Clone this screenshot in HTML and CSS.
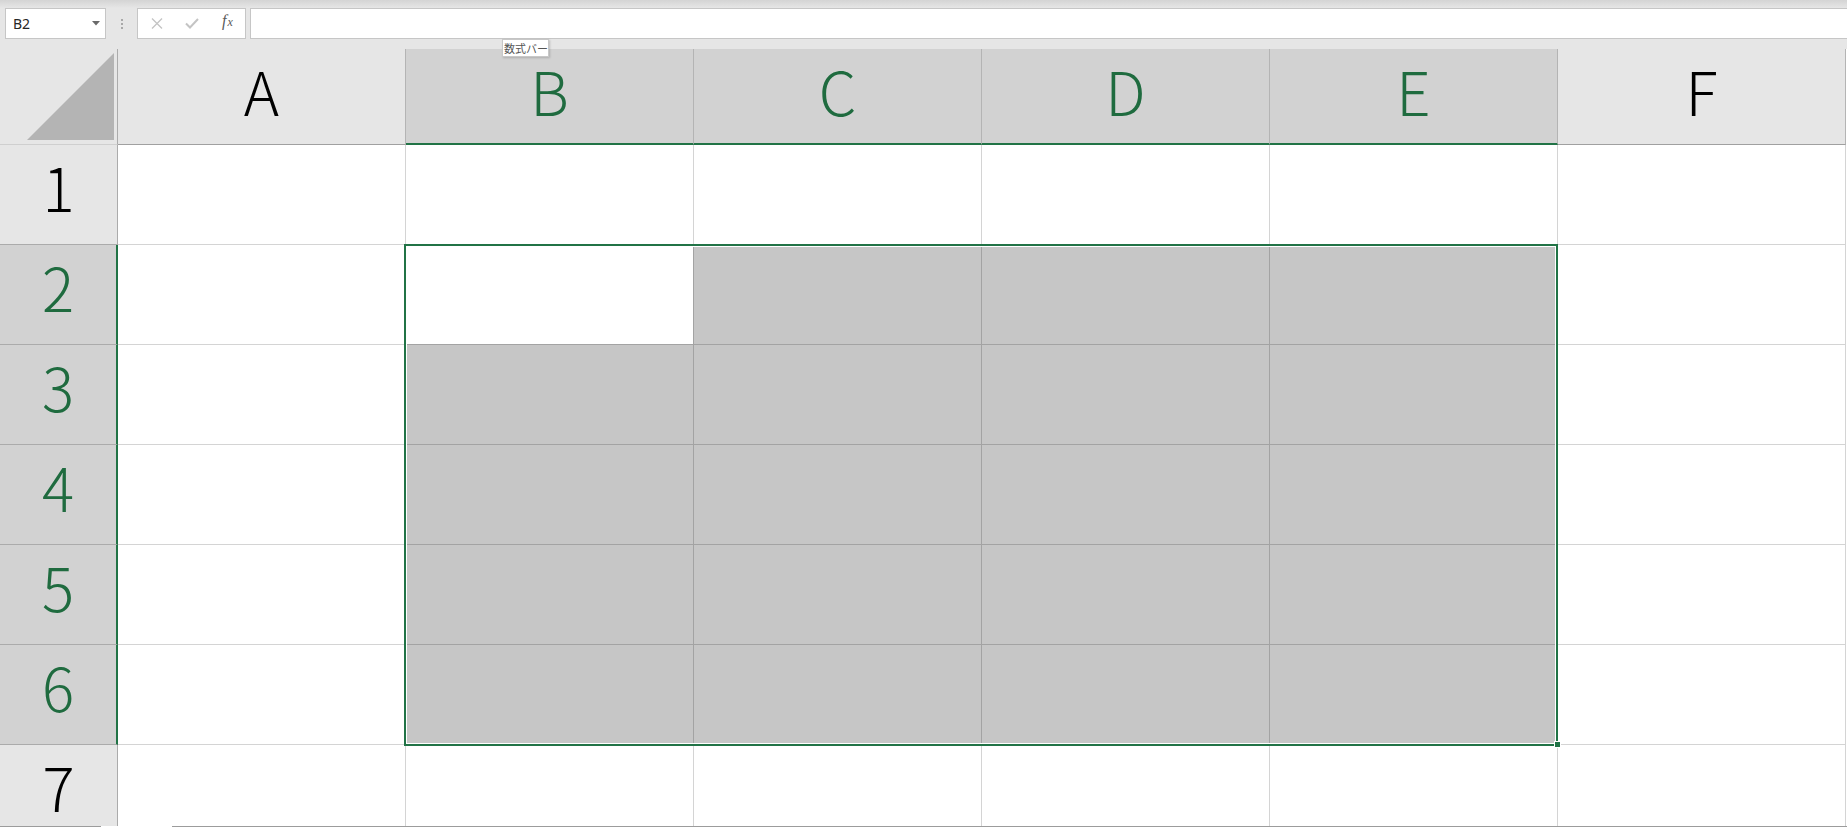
FILE: index.html
```html
<!DOCTYPE html>
<html lang="ja">
<head>
<meta charset="utf-8">
<title>Excel</title>
<link rel="stylesheet" href="styles.css">
</head>
<body>
<div class="toolbar">
  <div class="namebox"><span>B2</span><svg class="caret" width="8" height="5" viewBox="0 0 8 5"><polygon points="0,0 8,0 4,4.5" fill="#6a6a6a"/></svg></div>
  <div class="grip"><i></i><i></i><i></i></div>
  <div class="fbtns">
    <div class="slot"><svg width="12" height="11" viewBox="0 0 12 11"><path d="M1 0.5 L11 10.5 M11 0.5 L1 10.5" stroke="#c4c4c4" stroke-width="1.3" fill="none"/></svg></div>
    <div class="slot"><svg width="14" height="11" viewBox="0 0 14 11"><path d="M1 5.5 L5 9.5 L13 1" stroke="#c4c4c4" stroke-width="2" fill="none"/></svg></div>
    <div class="slot fx"><i>f</i><span class="fxx">x</span></div>
  </div>
  <div class="finput"></div>
</div>
<div class="tooltip">数式バー</div>
<div class="sheet">
  <div class="grid">
    <div class="corner"><svg width="117" height="95" viewBox="0 0 117 95"><polygon points="114,4 114,91 27,91" fill="#b4b4b4"/></svg></div>
    <div class="ch"><span class="lbl">A</span></div>
    <div class="ch sel"><span class="lbl">B</span></div>
    <div class="ch sel"><span class="lbl">C</span></div>
    <div class="ch sel"><span class="lbl">D</span></div>
    <div class="ch sel"><span class="lbl">E</span></div>
    <div class="ch"><span class="lbl">F</span></div>

    <div class="rh"><span class="lbl">1</span></div>
    <div class="c"></div><div class="c"></div><div class="c"></div><div class="c"></div><div class="c"></div><div class="c"></div>

    <div class="rh sel"><span class="lbl">2</span></div>
    <div class="c"></div><div class="c active"></div><div class="c sel"></div><div class="c sel"></div><div class="c sel"></div><div class="c"></div>

    <div class="rh sel"><span class="lbl">3</span></div>
    <div class="c"></div><div class="c sel"></div><div class="c sel"></div><div class="c sel"></div><div class="c sel"></div><div class="c"></div>

    <div class="rh sel"><span class="lbl">4</span></div>
    <div class="c"></div><div class="c sel"></div><div class="c sel"></div><div class="c sel"></div><div class="c sel"></div><div class="c"></div>

    <div class="rh sel"><span class="lbl">5</span></div>
    <div class="c"></div><div class="c sel"></div><div class="c sel"></div><div class="c sel"></div><div class="c sel"></div><div class="c"></div>

    <div class="rh sel"><span class="lbl">6</span></div>
    <div class="c"></div><div class="c sel"></div><div class="c sel"></div><div class="c sel"></div><div class="c sel"></div><div class="c"></div>

    <div class="rh"><span class="lbl">7</span></div>
    <div class="c"></div><div class="c"></div><div class="c"></div><div class="c"></div><div class="c"></div><div class="c"></div>
  </div>
  <div class="selection"></div>
  <div class="handle"></div>
</div>
<div class="tabgap"></div>
</body>
</html>
```

FILE: styles.css
```css
html, body {
  margin: 0;
  padding: 0;
}
body {
  width: 1847px;
  height: 827px;
  overflow: hidden;
  position: relative;
  background: #e6e6e6;
  font-family: "Noto Sans", "Noto Sans CJK JP", sans-serif;
}

/* formula bar */
.toolbar {
  height: 49px;
  box-sizing: border-box;
  padding: 8px 0 0 5px;
  display: flex;
  align-items: flex-start;
  background: linear-gradient(#d4d4d4, #e6e6e6 8px);
}
.namebox {
  width: 101px;
  height: 31px;
  box-sizing: border-box;
  border: 1px solid #c6c6c6;
  background: #fff;
  display: flex;
  align-items: center;
  justify-content: space-between;
  padding: 0 5px 0 7px;
  font-size: 14px;
  color: #262626;
}
.caret { display: block; }
.grip {
  width: 31px;
  height: 31px;
  display: flex;
  flex-direction: column;
  align-items: center;
  justify-content: center;
  gap: 2px;
}
.grip i {
  display: block;
  width: 2px;
  height: 2px;
  background: #a8a8a8;
}
.fbtns {
  width: 109px;
  height: 31px;
  box-sizing: border-box;
  border: 1px solid #c6c6c6;
  background: #fff;
  display: flex;
  align-items: center;
  padding-left: 1px;
}
.slot {
  width: 36px;
  height: 29px;
  display: flex;
  align-items: center;
  justify-content: center;
}
.slot svg { display: block; }
.fx {
  font-family: "Liberation Serif", serif;
  font-size: 16px;
  color: #5a5a5a;
  font-style: italic;
  line-height: 1;
  align-items: baseline;
  padding-top: 4px;
  box-sizing: border-box;
}
.fx i { font-style: italic; }
.fxx {
  font-size: 12px;
  margin-left: 1px;
}
.finput {
  flex: 1;
  margin-left: 4px;
  height: 31px;
  box-sizing: border-box;
  border: 1px solid #c6c6c6;
  border-right: none;
  background: #fff;
}

.tooltip {
  position: absolute;
  left: 502px;
  top: 39px;
  width: 47px;
  height: 18px;
  box-sizing: border-box;
  border: 1px solid #c8c8c8;
  background: #fff;
  box-shadow: 1px 1px 2px rgba(0,0,0,0.18);
  font-family: "Noto Sans CJK JP", sans-serif;
  font-size: 11px;
  line-height: 16px;
  color: #555;
  white-space: nowrap;
  padding-left: 1px;
  z-index: 5;
}

/* sheet */
.sheet {
  position: relative;
  height: 778px;
  box-sizing: border-box;
  border-bottom: 1px solid #9c9c9c;
  overflow: hidden;
  background: #fff;
}
.grid {
  display: grid;
  grid-template-columns: 118px repeat(6, 288px);
  grid-template-rows: 96px repeat(7, 100px);
}
.grid > div {
  box-sizing: border-box;
}
.corner {
  background: #e6e6e6;
  border-right: 1px solid #ababab;
  border-bottom: 1px solid #cfcfcf;
}
.corner svg { display: block; }
.ch, .rh {
  background: #e6e6e6;
  display: flex;
  justify-content: center;
  align-items: flex-start;
  color: #000;
}
.ch {
  border-right: 1px solid #b4b4b4;
  border-bottom: 1px solid #a0a0a0;
}
.ch.sel {
  background: #d2d2d2;
  color: #1f6b3f;
  border-bottom: 2px solid #217346;
}
.rh {
  border-right: 1px solid #ababab;
  border-bottom: 1px solid #ababab;
}
.rh.sel {
  background: #d2d2d2;
  color: #1f6b3f;
  border-right: 2px solid #217346;
}
.lbl {
  font-family: "Noto Sans CJK JP", "Noto Sans", sans-serif;
  font-weight: 300;
  font-size: 60px;
  line-height: 80px;
  padding-top: 1px;
}
.c {
  background: #fff;
  border-right: 1px solid #d4d4d4;
  border-bottom: 1px solid #d4d4d4;
}
.c.sel {
  background: #c6c6c6;
  border-color: #a3a3a3;
}
.c.active {
  border-color: #a3a3a3;
}

.selection {
  position: absolute;
  left: 404px;
  top: 195px;
  width: 1154px;
  height: 502px;
  box-sizing: border-box;
  border: 2px solid #217346;
  box-shadow: inset 0 0 0 1px #fff;
}
.handle {
  position: absolute;
  left: 1554px;
  top: 692px;
  width: 7px;
  height: 7px;
  box-sizing: border-box;
  background: #217346;
  border: 1px solid #fff;
}
.tabgap {
  position: absolute;
  left: 101px;
  top: 826px;
  width: 71px;
  height: 1px;
  background: #fff;
}
```
